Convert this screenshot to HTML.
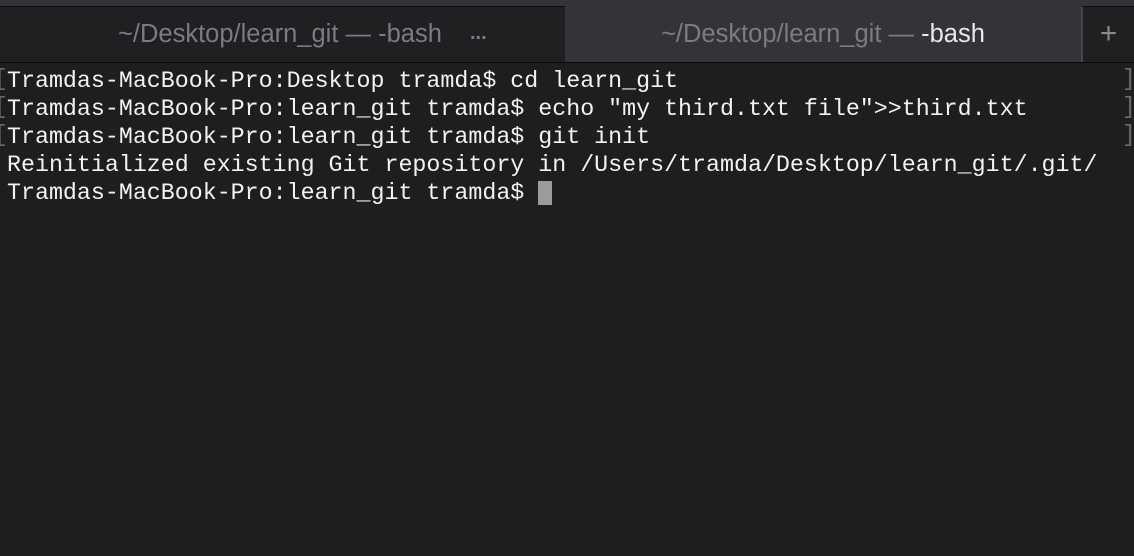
<!DOCTYPE html>
<html><head><style>
body{margin:0;width:1134px;height:556px;background:#1e1e1e;overflow:hidden;position:relative;font-family:"Liberation Sans",sans-serif}
.top{position:absolute;left:0;top:0;width:1134px;height:62px;background:#353339}
.tabL{position:absolute;left:0;top:6px;width:565px;height:56px;background:#201f22;border-top:1px solid #0e0e0e;box-sizing:border-box}
.plus{position:absolute;left:1081px;top:6px;width:53px;height:56px;background:#201f22;border-top:1px solid #0e0e0e;border-left:2px solid #47454a;box-sizing:border-box;color:#8a898c;font-size:30px;text-align:center;line-height:54px;font-weight:300}
.line{position:absolute;left:0;top:62px;width:1134px;height:1px;background:#0a0a0a}
.t{position:absolute;top:20px;font-size:25.5px;color:#7c7b7f;white-space:nowrap}
.term{position:absolute;left:7px;top:67px;font-family:"Liberation Mono",monospace;font-size:23.3px;line-height:28px;color:#f2f2f2;white-space:pre}
.br{position:absolute;font-family:"Liberation Mono",monospace;font-size:23px;color:#6a6a6a}
.cur{position:absolute;left:538px;top:181px;width:14px;height:24px;background:#9b9b9b}
</style></head><body>
<div class="top"></div>
<div class="tabL"></div>
<div class="plus">+</div>
<div class="line"></div>
<div class="t" style="left:118px">~/Desktop/learn_git — -bash</div>
<div class="t" style="left:470px;top:22px;font-size:20px;font-weight:bold">...</div>
<div class="t" style="left:661px">~/Desktop/learn_git — <span style="color:#e8e8e8">-bash</span></div>
<div class="br" style="left:-6px;top:66px">[</div>
<div class="br" style="left:-6px;top:94px">[</div>
<div class="br" style="left:-6px;top:122px">[</div>
<div class="br" style="left:1122px;top:66px">]</div>
<div class="br" style="left:1122px;top:94px">]</div>
<div class="br" style="left:1122px;top:122px">]</div>
<div class="term">Tramdas-MacBook-Pro:Desktop tramda$ cd learn_git
Tramdas-MacBook-Pro:learn_git tramda$ echo "my third.txt file"&gt;&gt;third.txt
Tramdas-MacBook-Pro:learn_git tramda$ git init
Reinitialized existing Git repository in /Users/tramda/Desktop/learn_git/.git/
Tramdas-MacBook-Pro:learn_git tramda$ </div>
<div class="cur"></div>
</body></html>
